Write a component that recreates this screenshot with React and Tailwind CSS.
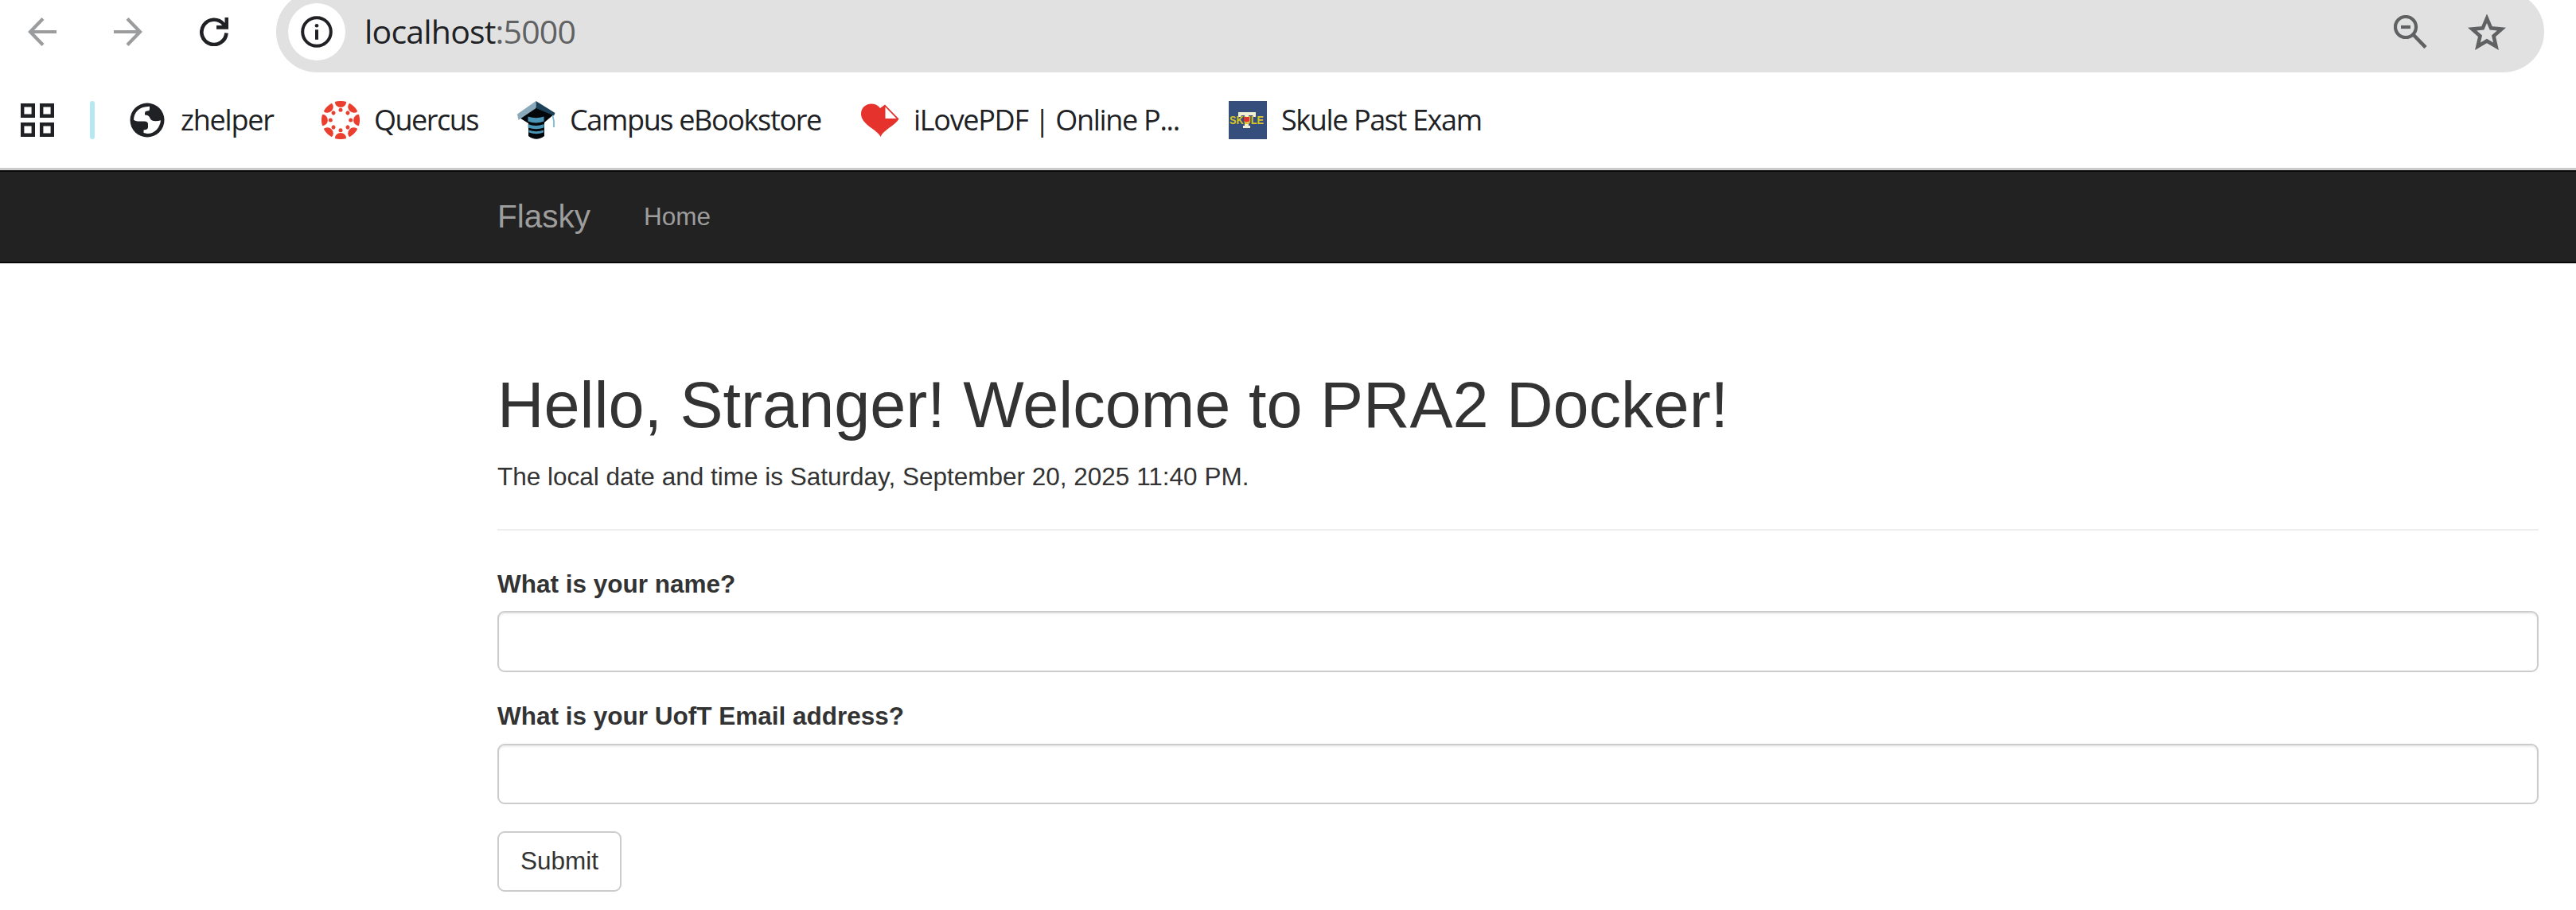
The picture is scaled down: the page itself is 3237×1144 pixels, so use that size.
import React from "react";

const ui = "font-['Open_Sans','Noto_Sans',sans-serif]";

function BackArrow({ className }) {
  return (
    <svg viewBox="0 0 36 36" className={className} fill="none" stroke="#9b9c9d" strokeWidth="4.2">
      <path d="M36 18H3M19 1.5L3 18l16 16.5" />
    </svg>
  );
}

function Reload() {
  return (
    <svg viewBox="0 0 36 36" className="ml-[72px] size-9 shrink-0" fill="none" stroke="#202124" strokeWidth="4.6">
      <path d="M33.5 19.5A15.6 15.6 0 1 1 29.8 8.2L34 12.5" />
      <path d="M21 12.4h12.8V0" />
    </svg>
  );
}

function Info() {
  return (
    <svg viewBox="0 0 40 40" className="size-10" fill="none">
      <circle cx="20" cy="20" r="17.8" stroke="#202124" strokeWidth="4" />
      <circle cx="20" cy="12.2" r="2.3" fill="#202124" />
      <path d="M20 17.3v12.5" stroke="#202124" strokeWidth="4" />
    </svg>
  );
}

function ZoomOut() {
  return (
    <svg viewBox="0 0 42 42" className="size-[42px]" fill="none" stroke="#5f6163">
      <circle cx="15" cy="15" r="13" strokeWidth="4.2" />
      <path d="M9 15h12" strokeWidth="4.2" />
      <path d="M24.500 24.500L40 40.500" strokeWidth="4.6" />
    </svg>
  );
}

function Star() {
  return (
    <svg viewBox="0 0 48 45" className="h-[45px] w-12" fill="none" stroke="#5f6163" strokeWidth="4.6">
      <path d="M24 5.2l5.2 12.2 13.3 1.200-10 8.700 3 12.900L24 33.400 12.500 40.200l3-12.900-10-8.700 13.300-1.200z" />
    </svg>
  );
}

function Apps() {
  return (
    <svg viewBox="0 0 42 42" className="size-[42px] shrink-0" fill="none" stroke="#202124" strokeWidth="4.4">
      <path d="M2.200 2.200h13.600v13.600H2.200zM26.200 2.200h13.600v13.600H26.200zM2.200 26.200h13.600v13.600H2.200zM26.200 26.200h13.600v13.600H26.200z" />
    </svg>
  );
}

function Globe() {
  return (
    <svg viewBox="0 0 44 44" className="size-11">
      <circle cx="22" cy="22" r="21.500" fill="#202124" />
      <path d="M5 21.500C5.500 12 12 5 25 4.800V8q0 2.500-3 2.500-3 0-3 3v2q4.500 0 6 3 1.500 4 5 4.500 5 .5 9-.8C38 31 32 39 22 39l-4.500-1v-3.500q5.500-.5 5.500-3.500v-4q0-3.500-4.500-3.500H12Q7 23.500 5 21.500z" fill="#fff" />
    </svg>
  );
}

const spokes = [0, 45, 90, 135, 180, 225, 270, 315];

function Canvas() {
  return (
    <svg viewBox="0 0 48 48" className="size-12" fill="#ea3f2f">
      {spokes.map((a) => (
        <g key={a} transform={`rotate(${a} 24 24)`}>
          <path d="M16.800 1.100A24 24 0 0 1 31.200 1.100A7.200 6.800 0 0 1 16.800 1.100z" />
          <circle cx="24" cy="11.300" r="2.500" />
        </g>
      ))}
    </svg>
  );
}

function GradCap() {
  return (
    <svg viewBox="0 0 48 48" className="size-12">
      <path d="M1 20L23.500 8L47 16L34 27v17q-10 7.500-20 0V28z" fill="#03070a" />
      <path d="M13.500 19.500q10 3.500 20 0v6q-10 4-20 0zM13.500 29q10 4 20 0v4.500q-10 3.500-20 0zM14.500 36.500q9.500 3.500 18.500 0v3q-9 3.500-18.500 0z" fill="#4a94b6" />
      <path d="M23.500 0L0 16.500L1.500 24L23.500 9z" fill="#8aa9ba" />
      <path d="M23.500 0L47.500 15L46 18.500L23.500 9z" fill="#1d4159" />
      <path d="M44.500 18.500L46 25v8" fill="none" stroke="#7fb9d4" strokeWidth="1.800" />
    </svg>
  );
}

function Heart() {
  return (
    <svg viewBox="0 0 48 42" className="h-[42px] w-12">
      <path d="M24.500 42C21 33 0 27 0 13C0 0 17-4 24 6L30 1.500L47.500 19.500C43 28 28 33 24.500 42z" fill="#e5322d" />
      <path d="M30.500 4.500V19h14z" fill="#fff" />
    </svg>
  );
}

function Skule() {
  return (
    <svg viewBox="0 0 48 48" className="size-12">
      <path d="M0 0h48v48H0z" fill="#364e7b" />
      <path d="M12 14h22v6h-3l-1-2h-5v13h2v3h-9v-3h2V18h-4l-1 2h-3z" fill="#f2eed2" />
      <text x="1" y="29" textLength="43" lengthAdjust="spacingAndGlyphs" fontSize="14" fontWeight="700" fontFamily="Liberation Sans" fill="#d9c524">SKULE</text>
      <path d="M19 20h7v5q-3.500 3-7 0z" fill="#e2332b" />
    </svg>
  );
}

function Bookmark({ icon, label, className, textClass }) {
  return (
    <div className={`flex shrink-0 items-center whitespace-nowrap ${className}`}>
      {icon}
      <span className={textClass}>{label}</span>
    </div>
  );
}

function Field({ label, className, inputClass }) {
  return (
    <div className={className}>
      <label className="block text-[31.5px] leading-[45px] font-bold">{label}</label>
      <input className={`block w-full rounded-[9px] border-2 border-[#ccc] bg-white px-[27px] shadow-[inset_0_2px_2px_rgba(0,0,0,0.075)] outline-none ${inputClass}`} />
    </div>
  );
}

export default function App() {
  return (
    <div className="h-[1144px] w-[3237px] overflow-hidden bg-white">
      <header className={`h-[214px] border-b-3 border-[#cbcbcb] text-[#202124] ${ui}`}>
        <div className="flex h-[91px] items-start pl-[35px]">
          <div className="flex h-20 items-center">
            <BackArrow className="size-9 shrink-0" />
            <BackArrow className="ml-[72px] size-9 shrink-0 rotate-180" />
            <Reload />
          </div>
          <div className="ml-[60px] flex h-[91px] w-[2850px] items-start overflow-hidden">
            <div className="-mt-[11px] flex h-[102px] w-full items-center rounded-full bg-[#e1e1e1] pl-[15px]">
              <div className="flex size-[72px] items-center justify-center rounded-full bg-white">
                <Info />
              </div>
              <div className="ml-6 flex-1 pb-0.5 text-[41px] leading-none tracking-[-0.8px]">
                localhost<span className="text-[#5f6163]">:5000</span>
              </div>
              <ZoomOut />
              <div className="ml-[51px] mr-[48px]">
                <Star />
              </div>
            </div>
          </div>
        </div>
        <div className="flex h-[120px] items-center pl-[26px] text-[36px] leading-none">
          <Apps />
          <div className="ml-[45px] h-12 w-1.5 rounded-full bg-[#b5e8f2]" />
          <Bookmark className="ml-11 w-[241px]" icon={<Globe />} label="zhelper" textClass="ml-5 tracking-[-1.2px]" />
          <Bookmark className="w-[246px]" icon={<Canvas />} label="Quercus" textClass="ml-[18px] tracking-[-1.5px]" />
          <Bookmark className="w-[432px]" icon={<GradCap />} label="Campus eBookstore" textClass="ml-[18px] tracking-[-1.35px]" />
          <Bookmark className="w-[462px]" icon={<Heart />} label="iLovePDF | Online P..." textClass="ml-[18px] tracking-[-1.3px]" />
          <Bookmark className="" icon={<Skule />} label="Skule Past Exam" textClass="ml-[18px] tracking-[-1.4px]" />
        </div>
      </header>
      <div className="font-['Liberation_Sans',Arial,sans-serif] text-[#333]">
        <nav className="flex h-[117px] items-center border-y-2 border-[#080808] bg-[#222] pl-[625px] text-[#9d9d9d]">
          <a className="text-[40.5px] leading-[45px]">Flasky</a>
          <a className="ml-[67px] text-[31.5px] leading-[45px]">Home</a>
        </nav>
        <main className="ml-[625px] w-[2565px] pt-[134px]">
          <h1 className="text-[81px] leading-[89px] font-normal">Hello, Stranger! Welcome to PRA2 Docker!</h1>
          <p className="mt-[23px] text-[31.5px] leading-[45px]">The local date and time is Saturday, September 20, 2025 11:40 PM.</p>
          <hr className="mt-[43px] border-t-2 border-[#eee]" />
          <Field className="mt-[45px]" inputClass="mt-[11px] h-[77px]" label="What is your name?" />
          <Field className="mt-[33px]" inputClass="mt-3 h-[76px]" label="What is your UofT Email address?" />
          <button className="mt-[34px] block h-[76px] w-[156px] rounded-[9px] border-2 border-[#ccc] bg-white pb-px text-[31.5px] leading-[45px]">Submit</button>
        </main>
      </div>
    </div>
  );
}
